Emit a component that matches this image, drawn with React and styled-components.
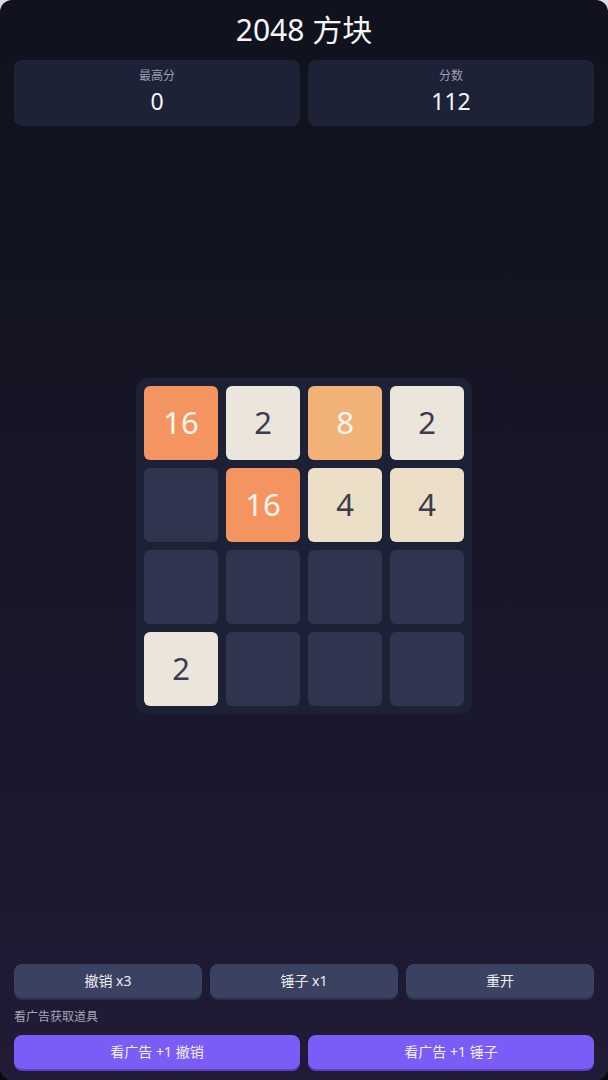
import styled, { createGlobalStyle } from 'styled-components';

const GlobalStyle = createGlobalStyle`
  html, body {
    margin: 0;
    padding: 0;
    background: linear-gradient(#dcdce0, #08080c);
  }
  * { box-sizing: border-box; }
`;

const board = [
  [16, 2, 8, 2],
  [0, 16, 4, 4],
  [0, 0, 0, 0],
  [2, 0, 0, 0],
];

const tileColors = {
  0: { bg: '#30354f', fg: 'transparent' },
  2: { bg: '#ece5dc', fg: '#3b3c4c' },
  4: { bg: '#ebdfc7', fg: '#3b3c4c' },
  8: { bg: '#f2b177', fg: '#fdf6ee' },
  16: { bg: '#f49561', fg: '#fdf6ee' },
};

const App = () => {
  return (
    <>
      <GlobalStyle />
      <Page>
        <Title>2048 方块</Title>
        <Scores>
          <ScoreCard>
            <ScoreLabel>最高分</ScoreLabel>
            <ScoreValue>0</ScoreValue>
          </ScoreCard>
          <ScoreCard>
            <ScoreLabel>分数</ScoreLabel>
            <ScoreValue>112</ScoreValue>
          </ScoreCard>
        </Scores>

        <Stage>
          <Board>
            {board.flat().map((v, i) => (
              <Tile key={i} $value={v}>
                {v || ''}
              </Tile>
            ))}
          </Board>
        </Stage>

        <Controls>
          <ToolButton>撤销 x3</ToolButton>
          <ToolButton>锤子 x1</ToolButton>
          <ToolButton>重开</ToolButton>
        </Controls>
        <Hint>看广告获取道具</Hint>
        <AdRow>
          <AdButton>看广告 +1 撤销</AdButton>
          <AdButton>看广告 +1 锤子</AdButton>
        </AdRow>
      </Page>
    </>
  );
};

const Page = styled.div`
  width: 608px;
  height: 1080px;
  border-radius: 12px;
  overflow: hidden;
  background: linear-gradient(180deg, #10121d 0%, #161626 45%, #211b36 100%);
  display: flex;
  flex-direction: column;
  padding: 0 14px 11px;
  font-family: 'Noto Sans', 'Noto Sans CJK SC', sans-serif;
  color: #f3f4f8;
`;

const Title = styled.h1`
  margin: 0;
  padding-top: 9px;
  height: 60px;
  text-align: center;
  font-size: 30px;
  font-weight: 400;
  line-height: 42px;
  color: #f7f7fa;
`;

const Scores = styled.div`
  display: grid;
  grid-template-columns: 1fr 1fr;
  gap: 8px;
`;

const ScoreCard = styled.div`
  height: 66px;
  border-radius: 8px;
  background: #1e2236;
  display: flex;
  flex-direction: column;
  align-items: center;
  padding-top: 7px;
`;

const ScoreLabel = styled.div`
  font-size: 12px;
  line-height: 18px;
  color: #9a9fb3;
`;

const ScoreValue = styled.div`
  font-size: 23px;
  font-weight: 400;
  line-height: 32px;
  color: #f5f6fa;
`;

const Stage = styled.div`
  flex: 1;
  display: flex;
  align-items: center;
  justify-content: center;
  padding-top: 2px;
`;

const Board = styled.div`
  width: 336px;
  height: 336px;
  padding: 8px;
  border-radius: 12px;
  background: #1d2135;
  display: grid;
  grid-template-columns: repeat(4, 74px);
  grid-template-rows: repeat(4, 74px);
  gap: 8px;
`;

const Tile = styled.div`
  border-radius: 6px;
  background: ${(p) => tileColors[p.$value].bg};
  color: ${(p) => tileColors[p.$value].fg};
  display: flex;
  align-items: center;
  justify-content: center;
  padding-bottom: 2px;
  font-size: 31px;
  font-weight: 400;
`;

const Controls = styled.div`
  display: grid;
  grid-template-columns: repeat(3, 1fr);
  gap: 8px;
`;

const ToolButton = styled.button`
  height: 34px;
  padding: 0 0 3px;
  border: none;
  border-radius: 8px;
  background: #3b4160;
  box-shadow: 0 2px 0 #2a2e46;
  color: #eceef5;
  font-family: inherit;
  font-size: 14px;
`;

const Hint = styled.div`
  margin-top: 11px;
  height: 26px;
  font-size: 12px;
  line-height: 16px;
  color: #a3a6b8;
`;

const AdRow = styled.div`
  display: grid;
  grid-template-columns: 1fr 1fr;
  gap: 8px;
`;

const AdButton = styled.button`
  height: 34px;
  padding: 0 0 3px;
  border: none;
  border-radius: 8px;
  background: #7b5cf6;
  box-shadow: 0 2px 0 #5a40c4;
  color: #f1eefe;
  font-family: inherit;
  font-size: 14px;
`;

export default App;
